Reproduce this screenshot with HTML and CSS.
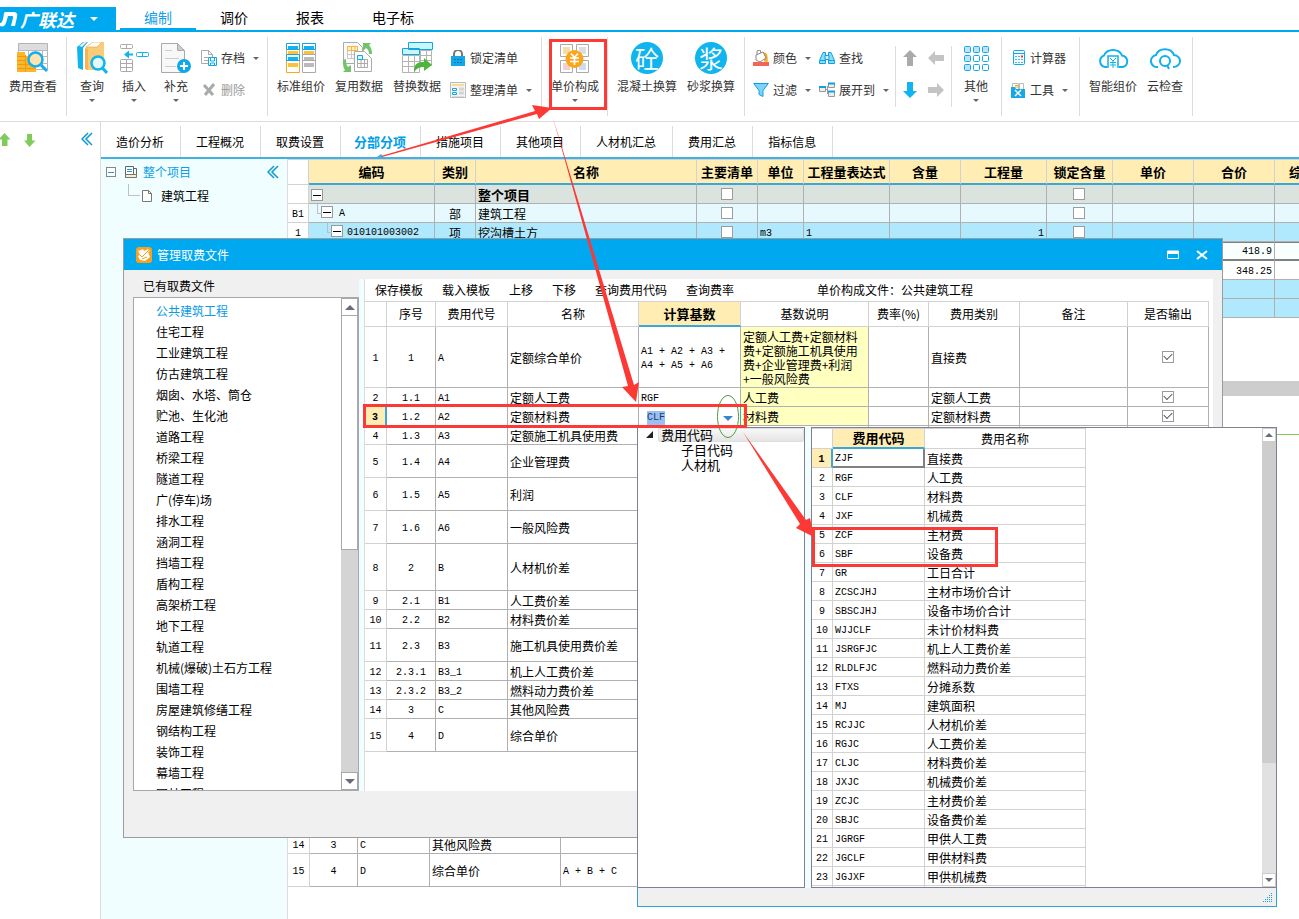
FILE: index.html
```html
<!DOCTYPE html>
<html lang="zh-CN">
<head>
<meta charset="utf-8">
<title>广联达</title>
<link rel="stylesheet" href="styles.css">
</head>
<body>
<div class="app">
<header class="topbar">
  <button class="brand">
    <svg width="18" height="16" viewBox="0 0 18 16"><path d="M0 15v-3c2 0 3-2 4-10l1-1h8c3 0 5 1 4 5l-2 9h-4l2-8c0-2 0-2-2-2H8L6 12c-1 3-3 4-6 3z" fill="#fff"/></svg>
    <span>广联达</span><i class="caret light"></i>
  </button>
  <nav class="modes">
    <a class="on" href="#">编制</a><a href="#">调价</a><a href="#">报表</a><a class="wide" href="#">电子标</a>
  </nav>
</header>

<div class="ribbon">
  <div class="group">
    <button class="big"><svg width="32" height="32" viewBox="0 0 32 32"><path d="M1.500 1.500h29v26h-29z" fill="#fff" stroke="#b4b4b4"/><path d="M2 2h28v6H2z" fill="#ddd"/><path d="M1 8.500h30M1 14.500h30M1 21.500h30M11.500 8v20M18.500 8v20M25.500 8v20" stroke="#bbb"/><path d="M0 10h8v4h11v16H0z" fill="#fbb62c"/><path d="M0 14.500h8M0 18.500h9M0 22.500h19M0 26.500h19M8.500 13v17" stroke="#f09a10"/><circle cx="18.500" cy="17.500" r="7" fill="#fde3b0" stroke="#12aeee" stroke-width="2.500"/><path d="M24 23l6 6" stroke="#12aeee" stroke-width="3"/></svg><span>费用查看</span></button>
  </div>
  <div class="group">
    <button class="big narrow"><svg width="32" height="32" viewBox="0 0 32 32"><path d="M1 5l6-5h5L7 6v22l-5-2z" fill="#10b4ee"/><path d="M3 4l5-4h3L6 5z" fill="#e8e8e8"/><path d="M9 6l9-6h10v24l-3 4H10z" fill="#fccb78"/><path d="M10 5l7-5h9l-5 5z" fill="#fff" stroke="#e8ad4c" stroke-width=".700"/><path d="M9 6v21l3 1V7z" fill="#f7b552"/><circle cx="22" cy="21" r="6.500" fill="#e4f7fd" stroke="#10b4ee" stroke-width="2.500"/><path d="M26.500 26l4.500 5" stroke="#10b4ee" stroke-width="3"/></svg><span>查询</span><i class="caret"></i></button>
    <button class="big narrow"><svg width="32" height="32" viewBox="0 0 32 32" fill="none"><g stroke="#aaa"><rect x="2.500" y="2.500" width="12" height="4" rx="1"/><path d="M8.500 2v5"/><rect x="2.500" y="17.500" width="12" height="12" rx="1"/><path d="M8.500 17v13M2 21.500h13M2 25.500h13"/></g><rect x="18.500" y="10.500" width="12" height="4" rx="1" stroke="#10b4ee"/><path d="M24.500 10v5" stroke="#10b4ee"/><path d="M6 12.500l5-4v3h4v2h-4v3z" fill="#10b4ee"/></svg><span>插入</span><i class="caret"></i></button>
    <button class="big narrow"><svg width="32" height="32" viewBox="0 0 32 32"><path d="M1.500 1.500h16l7 7v22h-23z" fill="#f8f8f8" stroke="#aaa"/><path d="M17.500 1.500v7h7z" fill="#ccc" stroke="#aaa"/><path d="M5 8.500h7M5 16.500h14M5 24.500h11" stroke="#ccc"/><circle cx="24" cy="24" r="7" fill="#10a8e8"/><path d="M20 24h8M24 20v8" stroke="#fff" stroke-width="2"/></svg><span>补充</span><i class="caret"></i></button>
    <div class="stack s66">
      <button class="cmd"><svg width="16" height="16" viewBox="0 0 16 16" fill="none"><path d="M7 13.500H.5V.5h7l4 4V7M7.500.5v4h4M3 7.500h4M3 10.500h4" stroke="#aaa"/><path d="M7.500 7.500h8v8h-8zM9.500 8v3h4V8M9.500 15v-2h4v2" stroke="#10a8e8"/></svg><span>存档</span><i class="caret"></i></button>
      <button class="cmd off"><svg width="16" height="16" viewBox="0 0 16 16"><path d="M3 3l9 10M13 2L4 13" stroke="#aaa" stroke-width="3"/></svg><span>删除</span></button>
    </div>
  </div>
  <div class="group">
    <button class="big"><svg width="32" height="32" viewBox="0 0 32 32"><g fill="#fff"><path d="M1.500 1.500h13v29h-13zM1.500 12.500h13" stroke="#f7a91d"/><path d="M17.500 1.500h13v29h-13z" stroke="#aaa"/></g><path d="M1.500 1.500h13v6h-13zM17.500 1.500h13v6h-13zM1.500 12.500h13v6h-13z" fill="#fff" stroke="#10a8e8"/><path d="M3 4h10v3H3zM19 4h10v3H19zM3 15h10v3H3z" fill="#10b4ee"/><path d="M3 9h10v3H3zM19 9h10v3H19zM3 21h10v4H3z" fill="#fbc23c"/><path d="M17.500 12.500h13M17.500 18.500h13" stroke="#aaa"/><path d="M19 15h10v3H19zM19 21h10v4H19z" fill="#bbb"/></svg><span>标准组价</span></button>
    <button class="big"><svg width="32" height="32" viewBox="0 0 32 32"><path d="M.5.5h14l5 5v16H.5z" fill="#fafafa" stroke="#aaa"/><path d="M4.500 4.500h10v12h-10zM4.500 8.500h10M4.500 12.500h10M8.500 4v13M12 4v13" fill="none" stroke="#c8c8c8"/><path d="M4.500 4.500h10v4h-10zM8.500 4v4M12 4v4" fill="#fff4cf" stroke="#f5b83c"/><path d="M11.500 9.500h10l7 7v13h-17z" fill="#fff" stroke="#aaa"/><path d="M14.500 17.500h10v8h-10zM14.500 21.500h10M18 13v13M21.500 17v9" fill="none" stroke="#aaa"/><path d="M14.500 13.500h5v4h-5z" fill="#d7f4fd" stroke="#10a8e8"/><path d="M20 1h8l-2 2c2 2 3 5 3 9h-3c0-3-1-5-3-6l-3 3zM8 30H0l2-2c-2-2-2-6-2-10l3-1c0 3 0 6 2 8l3-2z" fill="#72c36a"/></svg><span>复用数据</span></button>
    <button class="big"><svg width="32" height="32" viewBox="0 0 32 32"><path d="M1.500 13.500h17v17h-17zM1 19.500h18M1 24.500h18M7.500 13v18M13.500 13v18M19.500 8.500h11v15h-11zM19 13.500h12M19 18.500h12M25.500 8v16" fill="#fff" stroke="#b4b4b4"/><path d="M7.500.5h24v7h-24zM1.500 6.500h17v6h-17z" fill="#c8f6fd" stroke="#1aa2dc"/><path d="M13 30c0-8 3-10 10-10v-4l8 7-8 6v-4c-4 0-7 1-10 5z" fill="#4db53c"/></svg><span>替换数据</span></button>
    <div class="stack s91">
      <button class="cmd"><svg width="16" height="16" viewBox="0 0 16 16"><path d="M4 6V4a4 4 0 018 0v2" fill="none" stroke="#777" stroke-width="2"/><path d="M1 6h14v10H1z" fill="#10a8e8"/><path d="M4 9.500h2m1 0h2m1 0h2M4 12.500h2m1 0h2m1 0h2" stroke="#0b6fa8"/></svg><span>锁定清单</span></button>
      <button class="cmd"><svg width="16" height="16" viewBox="0 0 16 16"><path d="M.5.5h15v15H.5z" fill="#f4f4f4" stroke="#bbb"/><path d="M2 2h12v2H2z" fill="#fbd893"/><path d="M2.500 6.500h4v2h-4zM2.500 10.500h4v2h-4z" fill="#fff" stroke="#10a8e8"/><path d="M9 7h5M9 11h5" stroke="#d4d4d4" stroke-width="3"/><path d="M2 14.500h12" stroke="#ddd"/></svg><span>整理清单</span><i class="caret"></i></button>
    </div>
  </div>
  <div class="group tight">
    <button class="big"><svg width="32" height="32" viewBox="0 0 32 32"><path d="M1.500 2.500h12v12h-12zM17.500 2.500h12v12h-12zM1.500 18.500h12v12h-12zM17.500 18.500h12v12h-12z" fill="#fff" stroke="#aaa"/><path d="M4 5h7v7H4z" fill="#f5dfa5"/><path d="M20 5h7v7h-7z" fill="#ddd"/><path d="M4 21h7v7H4z" fill="#f3cfcf"/><path d="M20 21h7v7h-7z" fill="#cfdcf0"/><circle cx="15.500" cy="17" r="9" fill="#fba51a"/><path d="M12 11.500l3.500 4 3.500-4M15.500 15v8M11 16h9M11 19.500h9" stroke="#fff" stroke-width="1.700" fill="none"/></svg><span>单价构成</span><i class="caret"></i></button>
  </div>
  <div class="group">
    <button class="big wide"><b class="disc">砼</b><span>混凝土换算</span></button>
    <button class="big"><b class="disc">浆</b><span>砂浆换算</span></button>
  </div>
  <div class="group flush">
    <div class="stack s66">
      <button class="cmd"><svg width="16" height="16" viewBox="0 0 16 16"><path d="M10 3c4 0 4 3 4 8h-2z" fill="#f7a91d" stroke="#f7a91d" stroke-width="1.500"/><path d="M3 5l7-3 3 6-6 4-4-2z" fill="#fff" stroke="#888"/><path d="M4 5V1l3-1 1 3" fill="none" stroke="#888"/><path d="M0 12h16v4H0z" fill="#f26557"/></svg><span>颜色</span><i class="caret"></i></button>
      <button class="cmd"><svg width="16" height="16" viewBox="0 0 16 16"><path d="M.7 1.500h14.600l-5.300 7v6l-4-2v-4z" fill="#7fd3fb" stroke="#10a0e0"/></svg><span>过滤</span><i class="caret"></i></button>
    </div>
    <div class="stack s80">
      <button class="cmd"><svg width="16" height="16" viewBox="0 0 16 16"><path d="M4 2.500h2.500v11h-6v-3zM12 2.500H9.500v11h6v-3z" fill="#8fdcf8" stroke="#10a0e0"/><path d="M6 5.500h4v4H6z" fill="#c9effc" stroke="#10a0e0"/><path d="M1 10.500h5M10 10.500h5" stroke="#10a0e0"/></svg><span>查找</span></button>
      <button class="cmd"><svg width="16" height="16" viewBox="0 0 16 16" fill="none"><path d="M6 7.500h3M8.500 4v8" stroke="#999"/><path d="M.5 4.500h6v5h-6zM9.500 1.500h6v4h-6zM9.500 9.500h6v5h-6z" fill="#eee" stroke="#999"/><path d="M0 5h7M9 1.500h7M9 9.500h7" stroke="#10a0e0" stroke-width="2"/></svg><span>展开到</span><i class="caret"></i></button>
    </div>
    <div class="moves">
      <button aria-label="上移"><svg width="16" height="16" viewBox="0 0 16 16"><path d="M8 0l7 7h-4v9H5V7H1z" fill="#aaa"/></svg></button>
      <button aria-label="左移"><svg width="16" height="16" viewBox="0 0 16 16"><path d="M0 8l7-7v4h9v6H7v4z" fill="#c4c4c4"/></svg></button>
      <button aria-label="下移"><svg width="16" height="16" viewBox="0 0 16 16"><path d="M8 16l7-7h-4V0H5v9H1z" fill="#10b4f0"/></svg></button>
      <button aria-label="右移"><svg width="16" height="16" viewBox="0 0 16 16"><path d="M16 8L9 1v4H0v6h9v4z" fill="#c4c4c4"/></svg></button>
    </div>
    <button class="big other"><svg width="32" height="32" viewBox="0 0 32 32" stroke="#10a8e8" fill="#fff"><g fill="#bfe2f6"><rect x="4.500" y="4.500" width="6" height="6" rx="1"/><rect x="13.500" y="4.500" width="6" height="6" rx="1"/><rect x="22.500" y="4.500" width="6" height="6" rx="1"/><rect x="4.500" y="13.500" width="6" height="6" rx="1"/><rect x="4.500" y="22.500" width="6" height="6" rx="1"/></g><rect x="13.500" y="13.500" width="6" height="6" rx="1"/><rect x="22.500" y="13.500" width="6" height="6" rx="1"/><rect x="13.500" y="22.500" width="6" height="6" rx="1"/><rect x="22.500" y="22.500" width="6" height="6" rx="1"/></svg><span>其他</span><i class="caret"></i></button>
  </div>
  <div class="group">
    <div class="stack s69">
      <button class="cmd"><svg width="16" height="16" viewBox="0 0 16 16"><rect x="3.500" y=".5" width="11" height="14" rx="1" fill="#eefaff" stroke="#10a8e8"/><path d="M4 3.500h10" stroke="#10a8e8"/><path d="M5 6.500h2m1 0h2M5 9.500h2m1 0h2m1 0h2M5 12.500h2m1 0h2m1 0h2" stroke="#4ab9e6"/><path d="M11 6.500h2" stroke="#e33" stroke-width="2"/></svg><span>计算器</span></button>
      <button class="cmd"><svg width="16" height="16" viewBox="0 0 16 16"><path d="M2.500 1.500h6v8h-6zM9.500 1.500h4v8h-4z" fill="#fff" stroke="#bbb"/><path d="M5 3.500h3M5 5h3" stroke="#f7a91d"/><path d="M1 5h4l1 2h9v9H1z" fill="#14a8e4"/><path d="M5 8l6 6M11 8l-6 6" stroke="#fff" stroke-width="1.500"/></svg><span>工具</span><i class="caret"></i></button>
    </div>
  </div>
  <div class="group">
    <button class="big"><svg width="32" height="32" viewBox="0 0 32 32" fill="none" stroke="#12b0ec" stroke-width="2"><path d="M10 25H8a6 6 0 01-1-11.500 9.500 8 0 0118 0 6.500 6 0 011 11.500h-4"/><path d="M11 26V14h10v12" stroke-width="1.500"/><path d="M13 16l3 3 3-3M16 19v7M13 20.500h6M13 23h6" stroke-width="1"/></svg><span>智能组价</span></button>
    <button class="big cloud"><svg width="32" height="32" viewBox="0 0 32 32" fill="none" stroke="#12b0ec" stroke-width="2"><path d="M9 25a6 6 0 01-2-12 9.500 8.500 0 0118 0 6.500 6 0 01-1 12"/><circle cx="16" cy="19" r="5"/><path d="M18 23l2 4"/></svg><span>云检查</span></button>
  </div>
</div>

<div class="workspace">
  <aside class="rail">
    <svg width="36" height="16" viewBox="0 0 36 16" fill="#7fcc5c"><path d="M4.500 1l6 6.500h-3V14H2V7.500h-3.500zM29.500 15L24 8.500h3V2h5v6.500h3.500z"/></svg>
    <button class="fold" aria-label="折叠"><svg width="12" height="14" viewBox="0 0 12 14" fill="none" stroke="#0c9ad6"><path d="M7 1L1 7l6 6M11 1L5 7l6 6" stroke-width="1.500"/></svg></button>
  </aside>
  <section class="content">
    <nav class="tabs"><a href="#">造价分析</a><a href="#">工程概况</a><a href="#">取费设置</a><a class="on" href="#">分部分项</a><a href="#">措施项目</a><a href="#">其他项目</a><a href="#">人材机汇总</a><a href="#">费用汇总</a><a href="#">指标信息</a></nav>
    <div class="split">
      <aside class="tree">
        <div class="node root">
          <i class="pm"></i>
          <svg width="14" height="14" viewBox="0 0 14 14"><path d="M1.500 1.500h8v11h-8z" fill="#fff" stroke="#666"/><path d="M3 4.500h5M3 6.500h5" stroke="#1a9fd8"/><path d="M9.500 3.500h3v8" fill="none" stroke="#666"/><path d="M1.500 9.500h11v3h-11z" fill="#f7edc0" stroke="#777"/></svg>
          <span>整个项目</span>
          <button class="fold" aria-label="折叠"><svg width="12" height="14" viewBox="0 0 12 14" fill="none" stroke="#0c9ad6"><path d="M7 1L1 7l6 6M11 1L5 7l6 6" stroke-width="1.500"/></svg></button>
        </div>
        <div class="node leaf"><i class="elbow"></i>
          <svg width="12" height="14" viewBox="0 0 12 14"><path d="M1.500 1.500h6l3 3v8h-9z" fill="#fff" stroke="#777"/><path d="M7.500 1.500v3h3" fill="none" stroke="#777"/></svg>
          <span>建筑工程</span></div>
      </aside>
      <main class="main">
        <div class="upper">
          <table class="grid bill">
            <thead><tr><th class="blank"></th><th>编码</th><th>类别</th><th>名称</th><th>主要清单</th><th>单位</th><th>工程量表达式</th><th>含量</th><th>工程量</th><th>锁定含量</th><th>单价</th><th>合价</th><th>综合单价</th></tr></thead>
            <tbody>
              <tr class="total"><td class="no"></td><td class="l0"><i class="tog"></i></td><td></td><td>整个项目</td><td class="mid"><input type="checkbox" aria-label="主要清单"></td><td></td><td></td><td></td><td></td><td class="mid"><input type="checkbox" aria-label="锁定含量"></td><td></td><td></td><td></td></tr>
              <tr class="part"><td class="no">B1</td><td class="code l1"><i class="tog"></i>A</td><td class="mid">部</td><td>建筑工程</td><td class="mid"><input type="checkbox" aria-label="主要清单"></td><td></td><td></td><td></td><td></td><td class="mid"><input type="checkbox" aria-label="锁定含量"></td><td></td><td></td><td></td></tr>
              <tr class="item"><td class="no">1</td><td class="code l2"><i class="tog"></i>010101003002</td><td class="mid">项</td><td>挖沟槽土方</td><td class="mid"><input type="checkbox" aria-label="主要清单"></td><td class="code">m3</td><td class="code">1</td><td></td><td class="code num">1</td><td class="mid"><input type="checkbox" aria-label="锁定含量"></td><td></td><td></td><td></td></tr>
              <tr class="picked"><td></td><td></td><td></td><td></td><td></td><td></td><td></td><td></td><td></td><td></td><td></td><td class="code num">418.9</td><td></td></tr>
              <tr><td></td><td></td><td></td><td></td><td></td><td></td><td></td><td></td><td></td><td></td><td></td><td class="code num">348.25</td><td></td></tr>
              <tr class="item"><td></td><td></td><td></td><td></td><td></td><td></td><td></td><td></td><td></td><td></td><td></td><td></td><td></td></tr>
              <tr class="item"><td></td><td></td><td></td><td></td><td></td><td></td><td></td><td></td><td></td><td></td><td></td><td></td><td></td></tr>
            </tbody>
          </table>
        </div>
        <div class="hbar"></div>
        <div class="rule"></div>
        <div class="lower">
          <table class="grid parts">
            <tbody>
              <tr><td class="no">14</td><td class="code mid">3</td><td class="code">C</td><td>其他风险费</td><td></td></tr>
              <tr class="h33"><td class="no">15</td><td class="code mid">4</td><td class="code">D</td><td>综合单价</td><td class="code">A + B + C</td></tr>
            </tbody>
          </table>
        </div>
      </main>
    </div>
  </section>
</div>

<section class="dialog" role="dialog" aria-label="管理取费文件">
  <div class="titlebar">
    <svg width="16" height="16" viewBox="0 0 16 16"><rect width="16" height="16" rx="3" fill="#fba01c"/><path d="M2 4l5-2 1 2 4-2 2 2-2 1 2 5-5 4-5-1-2-4 2-1z" fill="#fff"/><path d="M4 8l2 2 7-7M6 12l5-2" stroke="#fba01c" fill="none"/></svg>
    <h1>管理取费文件</h1>
    <button aria-label="最大化"><svg width="12" height="12" viewBox="0 0 12 12"><path d="M.5 2h11v7.500H.5z" fill="none" stroke="#fff"/><path d="M0 2h12v3H0z" fill="#fff"/></svg></button>
    <button aria-label="关闭"><svg width="12" height="12" viewBox="0 0 12 12"><path d="M1 2l10 8M11 2L1 10" stroke="#fff" stroke-width="2"/></svg></button>
  </div>
  <div class="body">
    <div class="files">
      <h2>已有取费文件</h2>
      <div class="listbox">
        <ul>
          <li class="on">公共建筑工程</li><li>住宅工程</li><li>工业建筑工程</li><li>仿古建筑工程</li><li>烟囱、水塔、筒仓</li><li>贮池、生化池</li><li>道路工程</li><li>桥梁工程</li><li>隧道工程</li><li>广(停车)场</li><li>排水工程</li><li>涵洞工程</li><li>挡墙工程</li><li>盾构工程</li><li>高架桥工程</li><li>地下工程</li><li>轨道工程</li><li>机械(爆破)土石方工程</li><li>围墙工程</li><li>房屋建筑修缮工程</li><li>钢结构工程</li><li>装饰工程</li><li>幕墙工程</li><li>园林工程</li>
        </ul>
        <div class="vbar"><button aria-label="向上滚动"><i class="up"></i></button><div class="thumb"></div><div class="track"></div><button aria-label="向下滚动"><i class="down"></i></button></div>
      </div>
    </div>
    <div class="gutter"></div>
    <div class="panel">
      <div class="tools"><button>保存模板</button><button>载入模板</button><button>上移</button><button>下移</button><button>查询费用代码</button><button>查询费率</button><span>单价构成文件：公共建筑工程</span></div>
      <table class="grid fees">
        <thead><tr><th></th><th>序号</th><th>费用代号</th><th>名称</th><th class="hot">计算基数</th><th>基数说明</th><th>费率(%)</th><th>费用类别</th><th>备注</th><th>是否输出</th></tr></thead>
        <tbody>
          <tr class="h61"><td class="no">1</td><td class="code mid">1</td><td class="code">A</td><td>定额综合单价</td><td class="code">A1 + A2 + A3 +<br>A4 + A5 + A6</td><td class="note">定额人工费+定额材料<br>费+定额施工机具使用<br>费+企业管理费+利润<br>+一般风险费</td><td></td><td>直接费</td><td></td><td class="mid"><input type="checkbox" checked aria-label="是否输出"></td></tr>
          <tr><td class="no">2</td><td class="code mid">1.1</td><td class="code">A1</td><td>定额人工费</td><td class="code">RGF</td><td class="note">人工费</td><td></td><td>定额人工费</td><td></td><td class="mid"><input type="checkbox" checked aria-label="是否输出"></td></tr>
          <tr class="cur"><td class="no">3</td><td class="code mid">1.2</td><td class="code">A2</td><td>定额材料费</td><td class="edit"><div class="combo"><input type="text" value="CLF" aria-label="计算基数"><button aria-label="展开"><i class="down"></i></button></div></td><td class="note">材料费</td><td></td><td>定额材料费</td><td></td><td class="mid"><input type="checkbox" checked aria-label="是否输出"></td></tr>
          <tr><td class="no">4</td><td class="code mid">1.3</td><td class="code">A3</td><td>定额施工机具使用费</td><td></td><td></td><td></td><td></td><td></td><td></td></tr>
          <tr class="h33"><td class="no">5</td><td class="code mid">1.4</td><td class="code">A4</td><td>企业管理费</td><td></td><td></td><td></td><td></td><td></td><td></td></tr>
          <tr class="h33"><td class="no">6</td><td class="code mid">1.5</td><td class="code">A5</td><td>利润</td><td></td><td></td><td></td><td></td><td></td><td></td></tr>
          <tr class="h33"><td class="no">7</td><td class="code mid">1.6</td><td class="code">A6</td><td>一般风险费</td><td></td><td></td><td></td><td></td><td></td><td></td></tr>
          <tr class="h47"><td class="no">8</td><td class="code mid">2</td><td class="code">B</td><td>人材机价差</td><td></td><td></td><td></td><td></td><td></td><td></td></tr>
          <tr><td class="no">9</td><td class="code mid">2.1</td><td class="code">B1</td><td>人工费价差</td><td></td><td></td><td></td><td></td><td></td><td></td></tr>
          <tr><td class="no">10</td><td class="code mid">2.2</td><td class="code">B2</td><td>材料费价差</td><td></td><td></td><td></td><td></td><td></td><td></td></tr>
          <tr class="h33"><td class="no">11</td><td class="code mid">2.3</td><td class="code">B3</td><td>施工机具使用费价差</td><td></td><td></td><td></td><td></td><td></td><td></td></tr>
          <tr><td class="no">12</td><td class="code mid">2.3.1</td><td class="code">B3_1</td><td>机上人工费价差</td><td></td><td></td><td></td><td></td><td></td><td></td></tr>
          <tr><td class="no">13</td><td class="code mid">2.3.2</td><td class="code">B3_2</td><td>燃料动力费价差</td><td></td><td></td><td></td><td></td><td></td><td></td></tr>
          <tr><td class="no">14</td><td class="code mid">3</td><td class="code">C</td><td>其他风险费</td><td></td><td></td><td></td><td></td><td></td><td></td></tr>
          <tr class="h33"><td class="no">15</td><td class="code mid">4</td><td class="code">D</td><td>综合单价</td><td></td><td></td><td></td><td></td><td></td><td></td></tr>
        </tbody>
      </table>
    </div>
  </div>
</section>

<section class="popup">
  <div class="panes">
    <ul class="codes-tree">
      <li class="on"><svg width="8" height="8" viewBox="0 0 8 8"><path d="M7 0v7H0z" fill="#222"/></svg><span>费用代码</span></li>
      <li class="sub">子目代码</li>
      <li class="sub">人材机</li>
    </ul>
    <div class="codes-list">
      <table class="grid codes">
        <thead><tr><th></th><th class="hot">费用代码</th><th>费用名称</th></tr></thead>
        <tbody>
          <tr class="first"><td class="no">1</td><td class="code">ZJF</td><td>直接费</td></tr>
          <tr><td class="no">2</td><td class="code">RGF</td><td>人工费</td></tr>
          <tr><td class="no">3</td><td class="code">CLF</td><td>材料费</td></tr>
          <tr><td class="no">4</td><td class="code">JXF</td><td>机械费</td></tr>
          <tr><td class="no">5</td><td class="code">ZCF</td><td>主材费</td></tr>
          <tr><td class="no">6</td><td class="code">SBF</td><td>设备费</td></tr>
          <tr><td class="no">7</td><td class="code">GR</td><td>工日合计</td></tr>
          <tr><td class="no">8</td><td class="code">ZCSCJHJ</td><td>主材市场价合计</td></tr>
          <tr><td class="no">9</td><td class="code">SBSCJHJ</td><td>设备市场价合计</td></tr>
          <tr><td class="no">10</td><td class="code">WJJCLF</td><td>未计价材料费</td></tr>
          <tr><td class="no">11</td><td class="code">JSRGFJC</td><td>机上人工费价差</td></tr>
          <tr><td class="no">12</td><td class="code">RLDLFJC</td><td>燃料动力费价差</td></tr>
          <tr><td class="no">13</td><td class="code">FTXS</td><td>分摊系数</td></tr>
          <tr><td class="no">14</td><td class="code">MJ</td><td>建筑面积</td></tr>
          <tr><td class="no">15</td><td class="code">RCJJC</td><td>人材机价差</td></tr>
          <tr><td class="no">16</td><td class="code">RGJC</td><td>人工费价差</td></tr>
          <tr><td class="no">17</td><td class="code">CLJC</td><td>材料费价差</td></tr>
          <tr><td class="no">18</td><td class="code">JXJC</td><td>机械费价差</td></tr>
          <tr><td class="no">19</td><td class="code">ZCJC</td><td>主材费价差</td></tr>
          <tr><td class="no">20</td><td class="code">SBJC</td><td>设备费价差</td></tr>
          <tr><td class="no">21</td><td class="code">JGRGF</td><td>甲供人工费</td></tr>
          <tr><td class="no">22</td><td class="code">JGCLF</td><td>甲供材料费</td></tr>
          <tr><td class="no">23</td><td class="code">JGJXF</td><td>甲供机械费</td></tr>
          <tr><td class="no"></td><td></td><td></td></tr>
        </tbody>
      </table>
      <div class="vbar slim"><button aria-label="向上滚动"><i class="up"></i></button><div class="thumb"></div><div class="track"></div><button aria-label="向下滚动"><i class="down"></i></button></div>
    </div>
  </div>
  <div class="grip"><svg width="10" height="10" viewBox="0 0 10 10" fill="none" stroke="#1f9ad6" stroke-dasharray="1 1"><path d="M0 9.500h10"/><path d="M2 7.500h8"/><path d="M4 5.500h6"/><path d="M6 3.500h4"/><path d="M8 1.500h2"/></svg></div>
</section>

<svg class="marks" width="1299" height="919" viewBox="0 0 1299 919">
  <ellipse cx="728" cy="416.500" rx="10.500" ry="21" fill="none" stroke="#4f9c3a"/>
  <g fill="none" stroke="#fd3935" stroke-width="3"><path d="M550.500 40.500h55v68h-55zM364.500 405.500h381v21h-381zM813.500 528.500h183v37h-183z"/></g>
  <path d="M377 157l4-3 3 4z" fill="#3fb2e3"/>
  <g fill="#fd3935"><path d="M381 156l154-45-3-6 20 3-13 11-2-5-155 43zM552.500 116l81.500 269 5-3-3 20-14-15 6-1zM743 432l63 88 4-2 4 19-18-9 4-4z"/></g>
</svg>
</div>
</body>
</html>
```
FILE: styles.css
```css
* { box-sizing: border-box; }
body { margin: 0; color: #000; font: 12px/16px "Noto Sans CJK SC", sans-serif; background: #fff; overflow: hidden; }
button { margin: 0; padding: 0; border: 0; background: none; font: inherit; color: inherit; }
a { color: inherit; text-decoration: none; }
svg { display: block; flex: none; }
ul { list-style: none; margin: 0; padding: 0; }
h1, h2 { margin: 0; font-size: 12px; font-weight: 400; }
.app { position: relative; height: 100vh; display: flex; flex-direction: column; overflow: hidden; }

/* title bar */
.topbar { flex: none; display: flex; align-items: flex-end; height: 32px; border-bottom: 2px solid #00a8f0; }
.brand { width: 116px; height: 23px; display: flex; align-items: center; background: #00a8f0; color: #fff; }
.brand span { margin-left: 2px; font-size: 18px; line-height: 22px; font-weight: 700; font-style: italic; }
.caret { width: 0; border: 3px solid transparent; border-top-color: #666; border-bottom: 0; }
.caret.light { border-width: 4px; border-bottom: 0; border-top-color: #fff; margin-left: 16px; }
.modes { display: flex; height: 30px; margin-left: 4px; font-size: 14px; line-height: 34px; text-align: center; }
.modes a { width: 76px; }
.modes .wide { width: 90px; }
.modes .on { color: #14a0e6; border-bottom: 2px solid #00a8f0; }

/* ribbon */
.ribbon { flex: none; display: flex; padding: 5px 0; height: 90px; border-bottom: 1px solid #dcdcdc; color: #333; }
.group { display: flex; align-items: flex-start; padding: 0 4px; border-right: 1px solid #dcdcdc; }
.group.tight { padding-right: 3px; }
.group.flush { padding-right: 1px; }
.big { width: 58px; padding-top: 5px; display: flex; flex-direction: column; align-items: center; white-space: nowrap; }
.big span { margin-top: 4px; }
.big .caret { margin-top: 5px; }
.big.narrow { width: 42px; }
.big.wide { width: 70px; }
.big.cloud { width: 46px; }
.big.other { width: 48px; }
.disc { width: 32px; height: 32px; border-radius: 50%; background: #10b4ee; color: #fff; font-size: 24px; line-height: 31px; font-weight: 400; }
.stack { display: grid; grid-template-rows: 32px 32px; padding-top: 5px; }
.s66 { width: 66px; }
.s69 { width: 69px; }
.s80 { width: 80px; }
.s91 { width: 91px; }
.cmd { display: flex; align-items: center; gap: 4px; padding-left: 4px; white-space: nowrap; }
.cmd .caret { margin-left: 4px; }
.off { color: #999; }
.moves { display: grid; grid-template: 32px 32px / 26px 26px; place-items: center; margin-top: 9px; padding: 0 2px 5px 1px; height: 61px; align-content: center; border: solid #dcdcdc; border-width: 0 1px; }

/* workspace */
.workspace { flex: 1; display: flex; min-height: 0; }
.rail { flex: none; width: 101px; padding: 10px 7px 0 0; display: flex; align-items: flex-start; justify-content: space-between; border-right: 1px solid #dcdcdc; }
.content { flex: 1; min-width: 0; display: flex; flex-direction: column; }
.tabs { flex: none; display: flex; height: 37px; padding-top: 4px; border-bottom: 2px solid #3fb2e3; line-height: 32px; }
.tabs a { padding: 0 16px 0 15px; border-right: 1px solid #dcdcdc; }
.tabs .on { padding: 0 14px 0 13px; color: #00a0e9; font-size: 13px; font-weight: 700; }
.split { flex: 1; display: flex; min-height: 0; }
.tree { flex: none; width: 187px; padding-top: 1px; background: #f0feff; border-right: 1px solid #dcdcdc; }
.node { display: flex; align-items: center; height: 24px; padding-left: 5px; }
.root { color: #0aa0e6; }
.root svg { margin-right: 5px; }
.root .fold { margin-left: auto; padding-right: 3px; }
.pm { width: 10px; height: 10px; margin-right: 8px; border: 1px solid #888; background: linear-gradient(#1a9fd8, #1a9fd8) center / 6px 1px no-repeat #fff; }
.elbow { width: 12px; height: 12px; margin: 0 1px 12px 22px; border: solid #b8c4c6; border-width: 0 0 1px 1px; }
.leaf span { margin-left: 8px; }
.main { flex: 1; min-width: 0; display: flex; flex-direction: column; overflow: hidden; }
.upper { flex: none; height: 222px; overflow: hidden; }
.hbar { flex: none; height: 15px; background: #cdcdcd; }
.rule { flex: none; height: 39px; border-bottom: 1px solid #7fcc5c; }
.lower { flex: 1; display: flex; align-items: flex-end; padding-bottom: 32px; }

/* tables */
.grid { table-layout: fixed; width: 0; border-spacing: 0; background: #fff; }
.grid th, .grid td { padding: 0 2px; height: 19px; border: solid #b0b0b0; border-width: 0 1px 1px 0; line-height: 14px; white-space: nowrap; overflow: hidden; text-align: left; }
.grid td { padding-top: 2px; }
.grid th { text-align: center; font-weight: 400; border-color: #d2d2d2; border-top-width: 1px; }
.grid .no, .grid .code { padding-top: 4px; font-family: "Liberation Mono", "Noto Sans CJK SC", monospace; font-size: 10px; }
.grid .no { text-align: center; padding: 4px 0 0; background: #fff; border-color: #d2d2d2; }
.grid .mid { text-align: center; }
.grid .num { text-align: right; }
.grid .h33 td { height: 33px; }
.grid .h47 td { height: 47px; }
.grid .h61 td { height: 61px; }
.grid .hot { background: #ffedb3; border-bottom: 2px solid #3ba7d6; font-size: 13px; font-weight: 700; }
input[type=checkbox] { appearance: none; display: block; width: 12px; height: 12px; margin: 0 auto; border: 1px solid #9c9c9c; background: #fff; }
input[type=checkbox]:checked::before { content: ""; display: block; width: 7px; height: 4px; margin: 1px; border: solid #555; border-width: 0 0 1px 1px; transform: rotate(-45deg); }
.grid td:has(input[type=checkbox]) { padding: 0 3px 0 2px; }

.bill th { height: 26px; background: #ffedb3; border-bottom: 2px solid #3ba7d6; font-size: 13px; font-weight: 700; padding: 0; }
.bill .blank { background: #fff; border-bottom: 1px solid #d2d2d2; }
.bill th:nth-child(1) { width: 21px; }
.bill th:nth-child(2) { width: 126px; }
.bill th:nth-child(3) { width: 41px; }
.bill th:nth-child(4) { width: 221px; }
.bill th:nth-child(5) { width: 61px; }
.bill th:nth-child(6) { width: 46px; }
.bill th:nth-child(7), .bill th:nth-child(9) { width: 86px; }
.bill th:nth-child(8) { width: 71px; }
.bill th:nth-child(10) { width: 66px; }
.bill th:nth-child(11), .bill th:nth-child(12), .bill th:nth-child(13) { width: 81px; }
.total td { background: #dae3de; font-size: 13px; font-weight: 700; }
.part td { background: #e5f9ff; }
.item td { background: #b0e8fd; }
.picked td { background: #f9ffff; border-top: 1px solid #808080; border-bottom: 2px solid #808080; }
.grid .picked .code { padding-top: 2px; }
.tog { position: relative; display: block; width: 12px; height: 12px; border: 1px solid #999; background: linear-gradient(#000, #000) center / 8px 1px no-repeat #fff; }
.grid .l0, .grid .l1, .grid .l2 { padding-top: 2px; }
.l1 .tog { float: left; margin: 0 6px 0 10px; }
.l2 .tog { float: left; margin: 0 4px 0 20px; }
.grid .l1, .grid .l2 { line-height: 16px; }
.l1 .tog::after, .l2 .tog::after { content: ""; position: absolute; left: -5px; top: -6px; width: 4px; height: 12px; border: solid #b8c0c0; border-width: 0 0 1px 1px; }

.parts td:nth-child(1) { width: 22px; }
.parts td:nth-child(2) { width: 48px; }
.parts td:nth-child(3) { width: 72px; }
.parts td:nth-child(4) { width: 131px; }
.parts td:nth-child(5) { width: 102px; }

/* fee file window */
.dialog { position: absolute; left: 123px; top: 238px; width: 1100px; height: 600px; display: flex; flex-direction: column; border: 1px solid #9c9c9c; background: #f0f0f0; }
.titlebar { flex: none; display: flex; align-items: center; height: 31px; padding: 0 14px 0 12px; background: #00a8f0; color: #fff; }
.titlebar h1 { flex: 1; margin-left: 5px; }
.titlebar button + button { margin-left: 17px; }
.body { flex: 1; min-height: 0; display: flex; padding: 0 9px 46px; }
.files { flex: none; width: 226px; padding-top: 5px; display: flex; flex-direction: column; }
.files h2 { padding-left: 10px; line-height: 22px; }
.listbox { flex: 1; min-height: 0; display: flex; border: 1px solid #a8a8a8; background: #fff; }
.listbox ul { flex: 1; padding: 2px 0 0 22px; line-height: 21px; overflow: hidden; }
.listbox .on { color: #0a9ae6; }
.vbar { flex: none; width: 17px; display: flex; flex-direction: column; background: #d4d4d4; }
.vbar button { flex: none; height: 18px; display: flex; align-items: center; justify-content: center; border: 1px solid #a8a8a8; background: #fff; }
.up, .down { width: 0; border: 5px solid transparent; }
.up { border-top: 0; border-bottom-color: #6a6a78; }
.down { border-bottom: 0; border-top-color: #6a6a78; }
.vbar .thumb { flex: 234; border: 1px solid #a8a8a8; border-top: 0; background: #fff; }
.vbar .track { flex: 223; }
.gutter { flex: none; width: 6px; margin-top: 9px; background: #f0feff; border-right: 1px solid #dcdcdc; }
.panel { flex: 1; min-width: 0; margin-top: 9px; background: #fff; }
.tools { display: flex; gap: 19px; height: 22px; padding-left: 10px; line-height: 22px; }
.tools span { margin-left: 64px; }
.fees th { height: 26px; }
.fees th:nth-child(1) { width: 22px; }
.fees th:nth-child(2) { width: 49px; }
.fees th:nth-child(3) { width: 72px; }
.fees th:nth-child(4) { width: 131px; }
.fees th:nth-child(5) { width: 102px; }
.fees th:nth-child(6) { width: 128px; }
.fees th:nth-child(7) { width: 60px; }
.fees th:nth-child(8) { width: 91px; }
.fees th:nth-child(9) { width: 108px; }
.fees th:nth-child(10) { width: 81px; }
.fees .note { background: #ffffc0; }
.cur .no { background: #ffedb3; border-right: 2px solid #3ba7d6; font-weight: 700; }
.grid .edit { padding: 4px 0 0; border-right-color: #3ba7d6; }
.combo { display: flex; align-items: center; justify-content: space-between; padding: 0 7px 0 8px; }
.combo input { width: 18px; height: 14px; padding: 0; border: 0; background: #99c0f2; color: #223a66; font: 10px/14px "Liberation Mono", monospace; }
.combo .down { display: block; border-top-color: #3a86d0; }

/* code picker */
.popup { position: absolute; left: 637px; top: 427px; width: 640px; height: 480px; display: flex; flex-direction: column; background: #f0feff; }
.panes { flex: 1; min-height: 0; display: flex; justify-content: space-between; }
.codes-tree { flex: none; width: 168px; border: 1px solid #808090; background: #fff; font-size: 13px; line-height: 15px; }
.codes-tree .on { display: flex; align-items: center; height: 14px; padding-left: 8px; }
.codes-tree .on span { flex: 1; margin-left: 4px; padding-left: 2px; border: 1px solid #dedede; border-radius: 2px; background: linear-gradient(#f8f8f8, #e4e4e4); line-height: 12px; }
.codes-tree .sub { padding-left: 43px; }
.codes-list { flex: none; width: 466px; display: flex; justify-content: space-between; align-items: stretch; overflow: hidden; border: 1px solid #808090; background: #fff; }
.codes { align-self: flex-start; }
.codes th { height: 21px; }
.codes th, .codes td { border-color: #d2d2d2; }
.codes th:nth-child(1) { width: 21px; }
.codes th:nth-child(2) { width: 92px; }
.codes th:nth-child(3) { width: 161px; }
.codes .first .no { background: #ffedb3; border-right: 2px solid #3ba7d6; font-weight: 700; }
.codes .first .code { padding-top: 3px; border-right: 2px solid #808080; border-bottom: 2px solid #808080; }
.vbar.slim { width: 14px; background: #e1e1e1; }
.slim button { height: 14px; border-color: #ccc; }
.slim .up, .slim .down { border-left-width: 4px; border-right-width: 4px; }
.slim .up { border-bottom-width: 4px; }
.slim .down { border-top-width: 4px; }
.slim .thumb { flex: 321; border: 0; background: #cdcdcd; }
.slim .track { flex: 110; }
.grip { flex: none; height: 19px; padding: 4px 3px 0 0; display: flex; justify-content: flex-end; background: #f0f0f0; border: 1px solid #2ea2da; border-top: 0; }

.marks { position: absolute; left: 0; top: 0; pointer-events: none; }
```
